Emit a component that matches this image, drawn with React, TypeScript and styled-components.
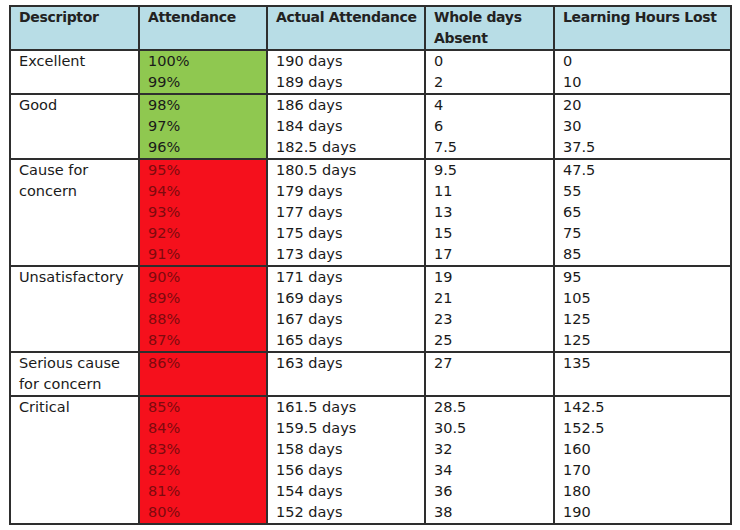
import React from "react";
import styled, { createGlobalStyle } from "styled-components";

type Group = {
  descriptor: string[];
  color: "green" | "red";
  attendance: string[];
  actual: string[];
  absent: string[];
  hours: string[];
};

const groups: Group[] = [
  {
    descriptor: ["Excellent"],
    color: "green",
    attendance: ["100%", "99%"],
    actual: ["190 days", "189 days"],
    absent: ["0", "2"],
    hours: ["0", "10"],
  },
  {
    descriptor: ["Good"],
    color: "green",
    attendance: ["98%", "97%", "96%"],
    actual: ["186 days", "184 days", "182.5 days"],
    absent: ["4", "6", "7.5"],
    hours: ["20", "30", "37.5"],
  },
  {
    descriptor: ["Cause for", "concern"],
    color: "red",
    attendance: ["95%", "94%", "93%", "92%", "91%"],
    actual: ["180.5 days", "179 days", "177 days", "175 days", "173 days"],
    absent: ["9.5", "11", "13", "15", "17"],
    hours: ["47.5", "55", "65", "75", "85"],
  },
  {
    descriptor: ["Unsatisfactory"],
    color: "red",
    attendance: ["90%", "89%", "88%", "87%"],
    actual: ["171 days", "169 days", "167 days", "165 days"],
    absent: ["19", "21", "23", "25"],
    hours: ["95", "105", "125", "125"],
  },
  {
    descriptor: ["Serious cause", "for concern"],
    color: "red",
    attendance: ["86%"],
    actual: ["163 days"],
    absent: ["27"],
    hours: ["135"],
  },
  {
    descriptor: ["Critical"],
    color: "red",
    attendance: ["85%", "84%", "83%", "82%", "81%", "80%"],
    actual: [
      "161.5 days",
      "159.5 days",
      "158 days",
      "156 days",
      "154 days",
      "152 days",
    ],
    absent: ["28.5", "30.5", "32", "34", "36", "38"],
    hours: ["142.5", "152.5", "160", "170", "180", "190"],
  },
];

const GlobalStyle = createGlobalStyle`
  html, body {
    margin: 0;
    padding: 0;
    background: #ffffff;
  }
`;

const Page = styled.div`
  padding: 5px 0 0 9px;
  font-family: "DejaVu Sans", "Liberation Sans", sans-serif;
  color: #1a1a1a;
`;

const Table = styled.table`
  width: 721px;
  border-collapse: collapse;
  table-layout: fixed;
  font-size: 14.5px;
  line-height: 21px;
`;

const HeadCell = styled.th`
  background: #b8dde6;
  border: 2px solid #2e2e2e;
  padding: 0 8px;
  text-align: left;
  vertical-align: top;
  font-weight: bold;
  font-size: 14px;
  letter-spacing: -0.3px;
  white-space: nowrap;
  color: #222222;
  height: 42px;
  box-sizing: border-box;
`;

const Cell = styled.td<{ $fill?: "green" | "red" }>`
  border: 2px solid #2e2e2e;
  padding: 0 8px;
  vertical-align: top;
  background: ${({ $fill }) =>
    $fill === "green" ? "#8fc850" : $fill === "red" ? "#f5101c" : "#ffffff"};
  color: ${({ $fill }) => ($fill === "red" ? "#7e0a0e" : "#1a1a1a")};
`;

const Line = styled.div`
  white-space: nowrap;
`;

const Lines = ({ items }: { items: string[] }) => (
  <>
    {items.map((t, i) => (
      <Line key={i}>{t}</Line>
    ))}
  </>
);

export default function App() {
  return (
    <Page>
      <GlobalStyle />
      <Table>
        <colgroup>
          <col style={{ width: 129 }} />
          <col style={{ width: 128 }} />
          <col style={{ width: 158 }} />
          <col style={{ width: 129 }} />
          <col style={{ width: 177 }} />
        </colgroup>
        <thead>
          <tr>
            <HeadCell>Descriptor</HeadCell>
            <HeadCell>Attendance</HeadCell>
            <HeadCell>Actual Attendance</HeadCell>
            <HeadCell>
              Whole days
              <br />
              Absent
            </HeadCell>
            <HeadCell>Learning Hours Lost</HeadCell>
          </tr>
        </thead>
        <tbody>
          {groups.map((g) => (
            <tr key={g.descriptor.join(" ")}>
              <Cell>
                <Lines items={g.descriptor} />
              </Cell>
              <Cell $fill={g.color}>
                <Lines items={g.attendance} />
              </Cell>
              <Cell>
                <Lines items={g.actual} />
              </Cell>
              <Cell>
                <Lines items={g.absent} />
              </Cell>
              <Cell>
                <Lines items={g.hours} />
              </Cell>
            </tr>
          ))}
        </tbody>
      </Table>
    </Page>
  );
}
